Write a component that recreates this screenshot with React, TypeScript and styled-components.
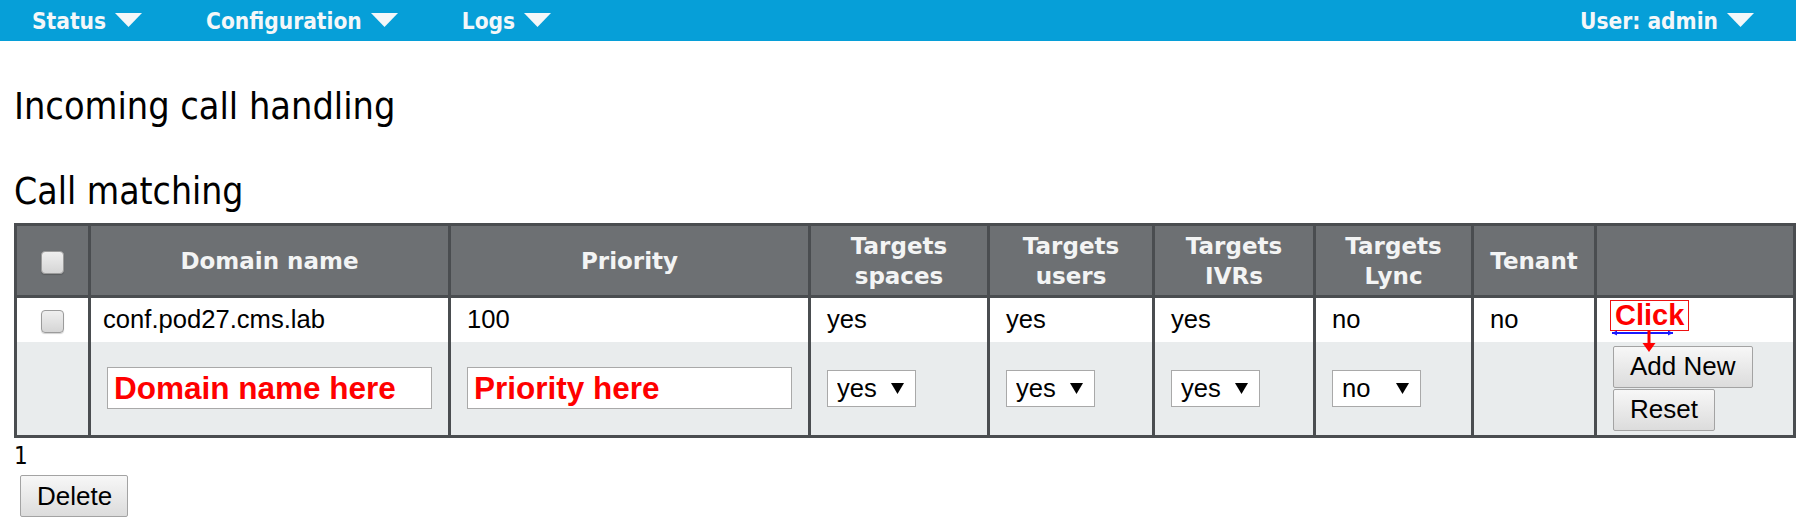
import React from "react";
import styled, { createGlobalStyle } from "styled-components";

const GlobalStyle = createGlobalStyle`
  html, body { margin: 0; padding: 0; background: #ffffff; }
  body {
    font-family: "DejaVu Sans Condensed", "DejaVu Sans", sans-serif;
    color: #000;
  }
  * { box-sizing: border-box; }
`;

const NavBar = styled.nav`
  height: 41px;
  background: #069fd8;
  display: flex;
  align-items: center;
  padding: 0 42px 0 32px;
`;

const NavItem = styled.div<{ $right?: boolean }>`
  display: flex;
  align-items: center;
  gap: 9px;
  font-family: "DejaVu Sans Condensed", "DejaVu Sans", sans-serif;
  font-weight: bold;
  font-size: 22.5px;
  line-height: 26px;
  color: #f4f7f9;
  margin-right: ${(p) => (p.$right ? "0" : "64px")};
  margin-left: ${(p) => (p.$right ? "auto" : "0")};
  cursor: pointer;
`;

const CaretSvg = styled.svg`
  display: block;
  margin-top: -1px;
`;

const Caret = () => (
  <CaretSvg width="27" height="14" viewBox="0 0 27 14">
    <path d="M0 0H27L13.5 14Z" fill="#f4f7f9" />
  </CaretSvg>
);

const Main = styled.main`
  padding: 0 0 0 14px;
`;

const PageTitle = styled.h1`
  margin: 43px 0 0;
  font-family: "DejaVu Sans Condensed", "DejaVu Sans", sans-serif;
  font-weight: normal;
  font-size: 37.5px;
  line-height: 44px;
`;

const SectionTitle = styled.h2`
  margin: 42px 0 0;
  font-family: "DejaVu Sans Condensed", "DejaVu Sans", sans-serif;
  font-weight: normal;
  font-size: 37px;
  line-height: 44px;
`;

const Grid = styled.table`
  margin-top: 9px;
  width: 1779px;
  table-layout: fixed;
  border-collapse: collapse;
  border: 3px solid #4a4d50;
`;

const HeadRow = styled.tr`
  height: 72px;
`;

const Th = styled.th`
  background: #6d7073;
  color: #f3f4f4;
  font-family: "DejaVu Sans", sans-serif;
  font-weight: bold;
  font-size: 23px;
  line-height: 30px;
  text-align: center;
  vertical-align: middle;
  padding: 0 8px;
  border: 3px solid #4a4d50;
`;

const BodyRow = styled.tr<{ $alt?: boolean; $h: number }>`
  height: ${(p) => p.$h}px;
  background: ${(p) => (p.$alt ? "#e9eced" : "#ffffff")};
`;

const Td = styled.td<{ $center?: boolean; $top?: boolean; $pl?: number }>`
  font-family: "Liberation Sans", Arial, sans-serif;
  font-size: 25.6px;
  color: #000;
  padding: ${(p) =>
    p.$center ? "0" : p.$top ? `2px 16px 0 ${p.$pl ?? 16}px` : `0 16px 0 ${p.$pl ?? 16}px`};
  text-align: ${(p) => (p.$center ? "center" : "left")};
  vertical-align: ${(p) => (p.$top ? "top" : "middle")};
  border-left: 3px solid #4a4d50;
  border-right: 3px solid #4a4d50;
`;

const Check = styled.input.attrs({ type: "checkbox" })`
  appearance: none;
  -webkit-appearance: none;
  width: 23px;
  height: 23px;
  margin: 0;
  display: inline-block;
  vertical-align: middle;
  border: 1px solid #9b9b9b;
  border-radius: 4px;
  background: linear-gradient(#efefef, #d5d5d5);
  box-shadow: 0 1px 1px rgba(0, 0, 0, 0.18);
`;

const TextField = styled.input`
  display: block;
  width: 325px;
  height: 42px;
  border: 1px solid #a9a9a9;
  background: #fff;
  padding: 0 6px;
  font-family: "Liberation Sans", Arial, sans-serif;
  font-weight: bold;
  font-size: 31.5px;
  color: #ff0000;
  outline: none;
`;

const SelectWrap = styled.div`
  position: relative;
  display: inline-block;
  width: 89px;
  height: 37px;
  vertical-align: middle;
`;

const Select = styled.select`
  appearance: none;
  -webkit-appearance: none;
  width: 89px;
  height: 37px;
  border: 1px solid #a9a9a9;
  border-radius: 0;
  background: #fff;
  padding: 0 0 0 9px;
  font-family: "Liberation Sans", Arial, sans-serif;
  font-size: 25.6px;
  color: #000;
  outline: none;
`;

const SelectArrow = styled.svg`
  position: absolute;
  right: 12px;
  top: 13px;
  pointer-events: none;
`;

const Dropdown = ({ value }: { value: string }) => (
  <SelectWrap>
    <Select defaultValue={value}>
      <option value="yes">yes</option>
      <option value="no">no</option>
    </Select>
    <SelectArrow width="13" height="11" viewBox="0 0 13 11">
      <path d="M0 0H13L6.5 11Z" fill="#000" />
    </SelectArrow>
  </SelectWrap>
);

const ButtonStack = styled.div`
  display: flex;
  flex-direction: column;
  align-items: flex-start;
  gap: 1px;
`;

const Button = styled.button`
  height: 42px;
  padding: 0 16px;
  border: 1px solid #a3a3a3;
  border-radius: 2px;
  background: linear-gradient(#f7f7f7, #dcdcdc);
  font-family: "Liberation Sans", Arial, sans-serif;
  font-size: 26px;
  color: #000;
  cursor: pointer;
`;

const ClickNote = styled.span`
  position: relative;
  display: inline-block;
  margin-left: -3px;
  border: 1px solid #ee1111;
  padding: 0 4px;
  height: 31px;
  font-family: "Liberation Sans", Arial, sans-serif;
  font-weight: bold;
  font-size: 29px;
  line-height: 29px;
  color: #ff0000;
`;

const NoteArrows = styled.svg`
  position: absolute;
  left: 0px;
  top: 100%;
  overflow: visible;
`;

const Pager = styled.div`
  margin-top: 5px;
  font-family: "DejaVu Sans Condensed", "DejaVu Sans", sans-serif;
  font-size: 24px;
  line-height: 26px;
`;

const DeleteButton = styled(Button)`
  margin: 6px 0 0 6px;
  width: 108px;
`;

const cols = [74, 360, 360, 179, 165, 161, 158, 123, 199];

export default function App() {
  return (
    <>
      <GlobalStyle />
      <NavBar>
        <NavItem>
          Status <Caret />
        </NavItem>
        <NavItem>
          Configuration <Caret />
        </NavItem>
        <NavItem>
          Logs <Caret />
        </NavItem>
        <NavItem $right>
          User: admin <Caret />
        </NavItem>
      </NavBar>
      <Main>
        <PageTitle>Incoming call handling</PageTitle>
        <SectionTitle>Call matching</SectionTitle>
        <Grid>
          <colgroup>
            {cols.map((w, i) => (
              <col key={i} style={{ width: w }} />
            ))}
          </colgroup>
          <thead>
            <HeadRow>
              <Th>
                <Check />
              </Th>
              <Th>Domain name</Th>
              <Th>Priority</Th>
              <Th>Targets spaces</Th>
              <Th>Targets users</Th>
              <Th>Targets IVRs</Th>
              <Th>Targets Lync</Th>
              <Th>Tenant</Th>
              <Th />
            </HeadRow>
          </thead>
          <tbody>
            <BodyRow $h={45}>
              <Td $center>
                <Check />
              </Td>
              <Td $pl={12}>conf.pod27.cms.lab</Td>
              <Td>100</Td>
              <Td>yes</Td>
              <Td>yes</Td>
              <Td>yes</Td>
              <Td>no</Td>
              <Td>no</Td>
              <Td $top>
                <ClickNote>
                  Click
                  <NoteArrows width="80" height="24" viewBox="0 0 80 24">
                    <line x1="1" y1="3" x2="62" y2="3" stroke="#1a1aff" strokeWidth="2" />
                    <path d="M1 3L6 0.5V5.5Z" fill="#1a1aff" />
                    <path d="M62 3L57 0.5V5.5Z" fill="#1a1aff" />
                    <line x1="38" y1="0" x2="38" y2="15" stroke="#ff0000" strokeWidth="3" />
                    <path d="M31.5 13L44.5 13L38 22Z" fill="#ff0000" />
                  </NoteArrows>
                </ClickNote>
              </Td>
            </BodyRow>
            <BodyRow $h={95} $alt>
              <Td $center />
              <Td>
                <TextField defaultValue="Domain name here" />
              </Td>
              <Td>
                <TextField defaultValue="Priority here" />
              </Td>
              <Td>
                <Dropdown value="yes" />
              </Td>
              <Td>
                <Dropdown value="yes" />
              </Td>
              <Td>
                <Dropdown value="yes" />
              </Td>
              <Td>
                <Dropdown value="no" />
              </Td>
              <Td />
              <Td>
                <ButtonStack>
                  <Button>Add New</Button>
                  <Button>Reset</Button>
                </ButtonStack>
              </Td>
            </BodyRow>
          </tbody>
        </Grid>
        <Pager>1</Pager>
        <DeleteButton>Delete</DeleteButton>
      </Main>
    </>
  );
}
